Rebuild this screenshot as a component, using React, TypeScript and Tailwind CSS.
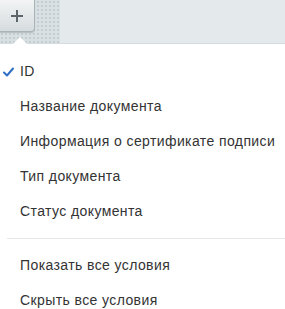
import React from 'react';

const items = ['ID', 'Название документа', 'Информация о сертификате подписи', 'Тип документа', 'Статус документа'];
const actions = ['Показать все условия', 'Скрыть все условия'];

const Check: React.FC = () => (
    <svg width="11" height="10" viewBox="0 0 11 10" className="absolute left-[3px] top-1/2 -translate-y-1/2">
        <path d="M1 5.5 L4 8.5 L10 1.5" fill="none" stroke="#2f6fc6" strokeWidth="2" strokeLinecap="round" strokeLinejoin="round" />
    </svg>
);

const App: React.FC = () => {
    return (
        <div className="w-[285px] h-[309px] bg-white overflow-hidden" style={{ fontFamily: '"Liberation Sans", Arial, sans-serif' }}>
            <div className="flex h-[44px] border-b border-[#d3dcdf]">
                <div className="relative w-[60px] bg-[#d9e0e3] bg-[radial-gradient(#c4ced2_1px,transparent_1px)] bg-[length:4px_4px]">
                    <button className="flex items-center justify-center w-[35px] h-[33px] -mt-[1px] rounded-br-[4px] border border-[#aab4b8] border-l-0 bg-gradient-to-b from-[#f2f4f5] to-[#d6dcde] shadow-[0_1px_1px_rgba(0,0,0,0.15)]">
                        <svg width="14" height="14" viewBox="0 0 14 14">
                            <path d="M7 1v12M1 7h12" stroke="#5c6569" strokeWidth="2" />
                        </svg>
                    </button>
                    <div className="absolute left-[13px] bottom-[-1px] w-0 h-0 border-l-[7px] border-r-[7px] border-b-[7px] border-l-transparent border-r-transparent border-b-white" />
                </div>
                <div className="flex-1 bg-[#e4eaec]" />
            </div>
            <div className="pt-[10px] text-[14px] tracking-[0.4px] text-[#333]">
                {items.map((t, i) => (
                    <div key={t} className="relative h-[35px] flex items-center pl-[20px] whitespace-nowrap">
                        {i === 0 && <Check />}
                        {t}
                    </div>
                ))}
                <div className="h-px bg-[#e6e6e6] ml-[7px] my-[9px]" />
                {actions.map(t => (
                    <div key={t} className="h-[35px] flex items-center pl-[20px] whitespace-nowrap">{t}</div>
                ))}
            </div>
        </div>
    );
};

export default App;
